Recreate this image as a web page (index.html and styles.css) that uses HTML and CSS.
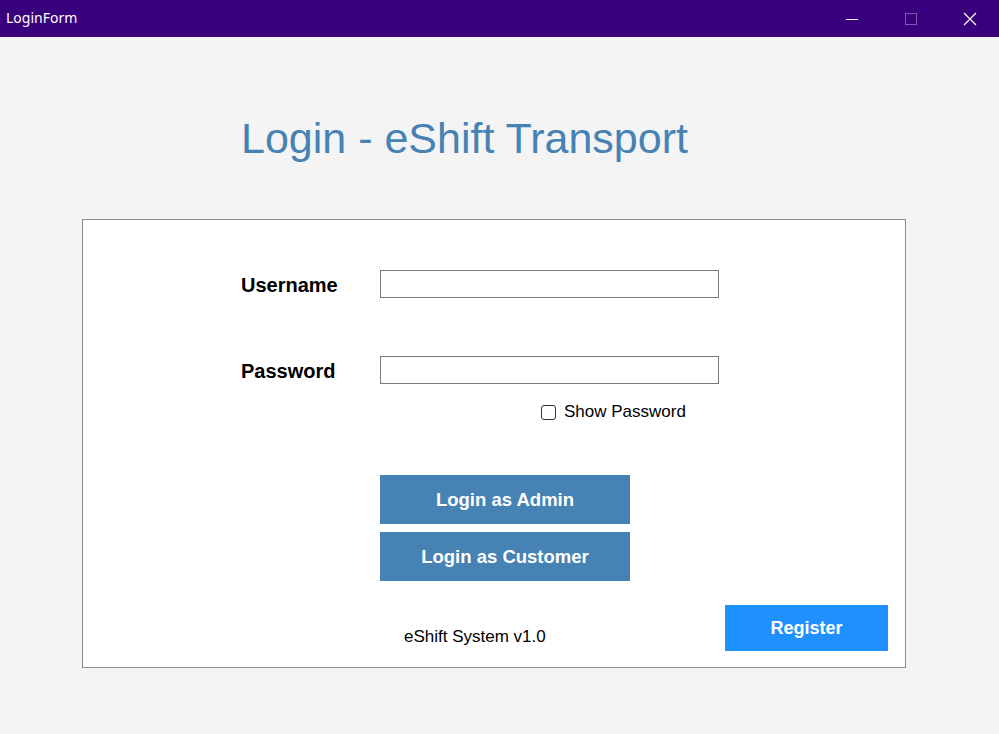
FILE: index.html
```html
<!DOCTYPE html>
<html>
<head>
  <title>LoginForm</title>
  <link rel="stylesheet" href="styles.css">
</head>
<body>
  <div class="titlebar">
    <span class="title">LoginForm</span>
    <div class="controls">
      <span class="ctl">
        <svg width="14" height="14" viewBox="0 0 14 14"><line x1="1" y1="7.5" x2="13" y2="7.5" stroke="#fff" stroke-width="1"/></svg>
      </span>
      <span class="ctl">
        <svg width="14" height="14" viewBox="0 0 14 14"><rect x="1.5" y="1.5" width="11" height="11" fill="none" stroke="#7a5aa8" stroke-width="1"/></svg>
      </span>
      <span class="ctl">
        <svg width="14" height="14" viewBox="0 0 14 14"><path d="M1 1 L13 13 M13 1 L1 13" stroke="#fff" stroke-width="1.2"/></svg>
      </span>
    </div>
  </div>

  <div class="page">
    <h1 class="heading">Login - eShift Transport</h1>

    <div class="panel">
      <div class="field-row first">
        <label class="label" for="username">Username</label>
        <input type="text" id="username" class="textbox">
      </div>
      <div class="field-row">
        <label class="label" for="password">Password</label>
        <input type="password" id="password" class="textbox">
      </div>
      <div class="check-row">
        <input type="checkbox" id="show-password" class="check">
        <label for="show-password">Show Password</label>
      </div>
      <div class="actions">
        <button class="btn">Login as Admin</button>
        <button class="btn">Login as Customer</button>
      </div>
      <div class="footer-row">
        <span class="version">eShift System v1.0</span>
        <button class="btn-register">Register</button>
      </div>
    </div>
  </div>

  <script>
    document.getElementById('show-password').addEventListener('change', function () {
      document.getElementById('password').type = this.checked ? 'text' : 'password';
    });
  </script>
</body>
</html>
```

FILE: styles.css
```css
body {
  margin: 0;
  background-color: #f4f4f4;
  font-family: "Liberation Sans", Arial, sans-serif;
  width: 999px;
  height: 734px;
  overflow: hidden;
}

.titlebar {
  height: 37px;
  background-color: #39007e;
  display: flex;
  align-items: center;
  justify-content: space-between;
}

.title {
  color: #fff;
  font-family: "Noto Sans", "Open Sans", sans-serif;
  font-size: 14px;
  padding-left: 6px;
  padding-bottom: 2px;
}

.controls {
  display: flex;
  height: 100%;
}

.ctl {
  width: 59px;
  display: flex;
  align-items: center;
  justify-content: center;
}

.page {
  padding-top: 80px;
}

.heading {
  margin: 0 0 60px 241px;
  font-size: 43px;
  line-height: 42px;
  font-weight: normal;
  color: #4682b4;
}

.panel {
  margin-left: 82px;
  width: 822px;
  height: 447px;
  background-color: #fff;
  border: 1px solid #8c8c8c;
}

.field-row {
  display: flex;
  align-items: center;
  padding-left: 158px;
  margin-top: 58px;
}

.field-row.first {
  margin-top: 50px;
}

.label {
  width: 139px;
  font-size: 20px;
  font-weight: bold;
  color: #000;
  position: relative;
  top: 1px;
}

.textbox {
  box-sizing: border-box;
  width: 339px;
  height: 28px;
  margin: 0;
  border: 1px solid #7a7a7a;
  background: #fff;
  padding: 2px 4px;
  font-size: 16px;
}

.check-row {
  display: flex;
  align-items: center;
  margin-top: 18px;
  padding-left: 458px;
  font-size: 17px;
  color: #000;
}

.check {
  appearance: none;
  -webkit-appearance: none;
  width: 15px;
  height: 15px;
  margin: 0 8px 0 0;
  border: 1px solid #333;
  border-radius: 3px;
  background: #fff;
}

.actions {
  display: flex;
  flex-direction: column;
  gap: 8px;
  padding-left: 297px;
  margin-top: 53px;
}

.btn {
  width: 250px;
  height: 49px;
  border: none;
  background-color: #4682b4;
  color: #fff;
  font-family: "Liberation Sans", Arial, sans-serif;
  font-size: 18.5px;
  font-weight: bold;
  cursor: pointer;
}

.footer-row {
  display: flex;
  align-items: flex-end;
  margin-top: 24px;
  padding-left: 321px;
  padding-right: 17px;
}

.version {
  font-size: 17px;
  color: #000;
  padding-bottom: 4px;
}

.btn-register {
  margin-left: auto;
  width: 163px;
  height: 46px;
  border: none;
  background-color: #1e90ff;
  color: #fff;
  font-family: "Liberation Sans", Arial, sans-serif;
  font-size: 18px;
  font-weight: bold;
  cursor: pointer;
}
```
